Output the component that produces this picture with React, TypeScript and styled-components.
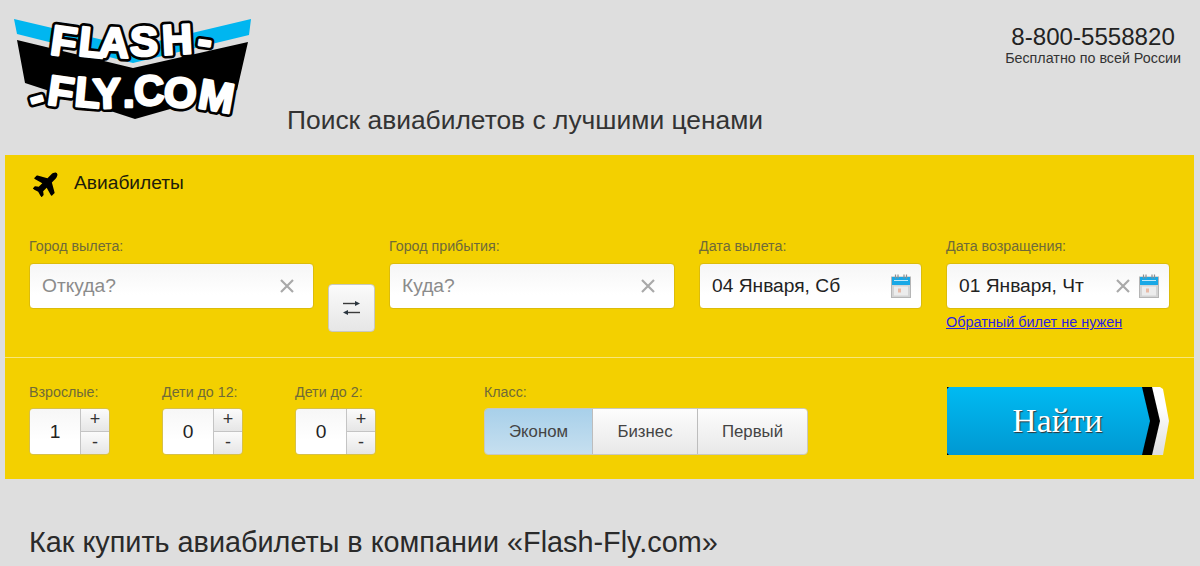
import React from 'react'
import styled, { createGlobalStyle } from 'styled-components'
import { FaPlane } from 'react-icons/fa'

const GlobalStyle = createGlobalStyle`
  html, body {
    margin: 0;
    padding: 0;
    height: 566px;
    overflow: hidden;
    background: #dedede;
    font-family: 'Liberation Sans', Arial, sans-serif;
  }
`

const Page = styled.div`
  width: 1200px;
  height: 566px;
  overflow: hidden;
`

const Header = styled.header`
  display: flex;
  height: 155px;
  box-sizing: border-box;
  padding: 13px 19px 0 14px;
`

const LogoWrap = styled.div`
  width: 240px;
  height: 110px;
  flex: none;
`

const Slogan = styled.div`
  flex: 1;
  margin: 92px 0 0 33px;
  font-size: 26.4px;
  line-height: 30px;
  color: #333;
`

const Contacts = styled.div`
  margin-top: 10px;
  text-align: center;
  color: #222;
`

const Phone = styled.div`
  font-size: 24.1px;
  line-height: 27px;
`

const Free = styled.div`
  font-size: 14.3px;
  line-height: 16px;
  color: #333;
`

const Panel = styled.section`
  width: 1189px;
  height: 324px;
  margin-left: 5px;
  background: #f3d000;
`

const Tab = styled.div`
  display: flex;
  align-items: center;
  height: 56px;
  padding-left: 28px;
  font-size: 19.2px;
  color: #1d1d0a;
`

const PlaneIcon = styled(FaPlane)`
  width: 28px;
  height: 28px;
  margin-right: 13px;
  color: #000;
  transform: rotate(-45deg);
`

const Routes = styled.div`
  display: flex;
  align-items: flex-start;
  height: 147px;
  box-sizing: border-box;
  padding: 27px 0 0 24px;
  border-bottom: 1px solid #f8e67a;
`

const Field = styled.div<{ $width: number; $gap?: number }>`
  width: ${(p) => p.$width}px;
  margin-right: ${(p) => p.$gap ?? 0}px;
  flex: none;
`

const Label = styled.div<{ $tight?: boolean }>`
  font-size: 14.25px;
  line-height: 16px;
  height: 16px;
  margin-bottom: ${(p) => (p.$tight ? 8 : 9)}px;
  color: #6f6a38;
  white-space: nowrap;
`

const InputBox = styled.div`
  display: flex;
  align-items: center;
  height: 46px;
  box-sizing: border-box;
  padding: 0 10px 0 12px;
  background: linear-gradient(#f6f6f6, #fff 70%);
  border: 1px solid #dcbc0a;
  border-radius: 4px;
`

const Input = styled.input`
  flex: 1;
  min-width: 0;
  padding: 0;
  border: 0;
  outline: 0;
  background: transparent;
  font-family: inherit;
  font-size: 19.2px;
  color: #222;
  &::placeholder {
    color: #8b8b8b;
    opacity: 1;
  }
`

const SwapButton = styled.button`
  display: flex;
  align-items: center;
  justify-content: center;
  flex: none;
  width: 47px;
  height: 48px;
  margin: 46px 14px 0 0;
  padding: 0;
  background: linear-gradient(#fbfbfb, #e6e6e6);
  border: 1px solid #c8c8c0;
  border-radius: 4px;
`

const BackLink = styled.a`
  display: block;
  margin-top: 5px;
  font-size: 14.45px;
  line-height: 16px;
  color: #2b1fe0;
  text-decoration: underline;
  white-space: nowrap;
`

const Options = styled.div`
  display: flex;
  align-items: flex-end;
  padding: 26px 0 0 24px;
`

const Stepper = styled.div`
  display: flex;
  width: 81px;
  height: 47px;
  box-sizing: border-box;
  border: 1px solid #d6c04a;
  border-radius: 4px;
  overflow: hidden;
`

const StepValue = styled.div`
  display: flex;
  align-items: center;
  justify-content: center;
  width: 50px;
  background: linear-gradient(#f7f7f7, #fff 70%);
  font-size: 19.2px;
  color: #222;
`

const StepButtons = styled.div`
  display: flex;
  flex: 1;
  flex-direction: column;
  border-left: 1px solid #c4c4c4;
`

const StepButton = styled.button`
  flex: 1;
  padding: 0 0 2px;
  border: 0;
  background: linear-gradient(#fbfbfb, #e6e6e6);
  font-family: inherit;
  font-size: 18px;
  line-height: 18px;
  color: #333;
  & + & {
    border-top: 1px solid #c4c4c4;
  }
`

const ClassGroup = styled.div`
  display: flex;
  height: 47px;
  box-sizing: border-box;
  border: 1px solid #c8c8c0;
  border-radius: 4px;
  overflow: hidden;
`

const ClassButton = styled.button<{ $width: number; $active?: boolean }>`
  width: ${(p) => p.$width}px;
  padding: 0;
  border: 0;
  background: ${(p) =>
    p.$active ? 'linear-gradient(#a8d0ea, #c6dfef)' : 'linear-gradient(#fdfdfd, #e8e8e8)'};
  font-family: inherit;
  font-size: 16.8px;
  color: #444;
  & + & {
    border-left: 1px solid #bdbdbd;
  }
`

const SearchButton = styled.button`
  position: relative;
  width: 223px;
  height: 68px;
  margin-left: 139px;
  padding: 0 2px 0 0;
  border: 0;
  background: transparent;
  font-family: 'Liberation Serif', 'Times New Roman', serif;
  font-size: 33.8px;
  color: #fff;
  text-shadow: 1px 1px 1px #333;
  &::before,
  &::after {
    content: '';
    position: absolute;
    inset: 0;
  }
  &::before {
    background: linear-gradient(#fff 30%, #dedede);
    clip-path: polygon(0 0, 213px 0, 216px 2px, 222px 50%, 216px 100%, 0 100%);
  }
  &::after {
    background: linear-gradient(#00baf2, #0098d2);
    clip-path: polygon(0 2px, 2px 0, 195px 0, 203px 50%, 195px 100%, 2px 100%, 0 calc(100% - 2px));
  }
`

const SearchBand = styled.span`
  position: absolute;
  inset: 0;
  background: #000;
  clip-path: polygon(0 0, 205px 0, 213px 50%, 205px 100%, 0 100%);
`

const SearchText = styled.span`
  position: relative;
  z-index: 2;
`

const Heading = styled.h2`
  margin: 47px 0 0 29px;
  font-size: 28.8px;
  line-height: 32px;
  font-weight: 400;
  color: #2a2a2a;
`

const LOGO_LETTERS = [
  { c: 'F', x: 37, y: 43, r: 8 },
  { c: 'L', x: 65, y: 44, r: 6 },
  { c: 'A', x: 85, y: 44, r: 3 },
  { c: 'S', x: 116, y: 43, r: 0 },
  { c: 'H', x: 148, y: 41, r: -3 },
  { c: '-', x: 184, y: 42, r: 8 },
  { c: '-', x: 15, y: 96, r: -16 },
  { c: 'F', x: 34, y: 93, r: 8 },
  { c: 'L', x: 61, y: 94, r: 5 },
  { c: 'Y', x: 79, y: 95, r: -2 },
  { c: '.', x: 109, y: 94, r: 0 },
  { c: 'C', x: 120, y: 92, r: -2 },
  { c: 'O', x: 150, y: 94, r: 3 },
  { c: 'M', x: 185, y: 97, r: 10 },
]

const LogoLetter = styled.text<{ $outline?: boolean }>`
  font-family: 'Liberation Sans', Arial, sans-serif;
  font-weight: 700;
  font-size: 42px;
  fill: ${(p) => (p.$outline ? '#000' : '#fff')};
  stroke: ${(p) => (p.$outline ? '#000' : '#fff')};
  stroke-width: ${(p) => (p.$outline ? 8 : 2.6)}px;
  stroke-linejoin: round;
`

const Logo = () => (
  <svg width='240' height='110' viewBox='0 0 240 110'>
    <polygon points='0,6 119,34 237,6 235,22 119,50 3,21' fill='#00b6f0' />
    <polygon points='3,27 119,55 234,29 223,77 121,106 11,70' fill='#000' />
    {[true, false].map((outline) =>
      LOGO_LETTERS.map((l, i) => (
        <LogoLetter
          key={`${outline}-${i}`}
          $outline={outline}
          x={l.x}
          y={l.y}
          transform={`rotate(${l.r} ${l.x + 13} ${l.y - 14})`}
        >
          {l.c}
        </LogoLetter>
      ))
    )}
  </svg>
)

const CloseIcon = () => (
  <svg width='16' height='16' viewBox='0 0 16 16' style={{ flex: 'none', marginRight: 8 }}>
    <path d='M2 2 L14 14 M14 2 L2 14' stroke='#a9a9a9' strokeWidth='2.2' fill='none' />
  </svg>
)

const CalendarIcon = () => (
  <svg width='20' height='24' viewBox='0 0 20 24' style={{ flex: 'none' }}>
    <rect x='0.5' y='3' width='19' height='20.5' fill='#d4d4d4' stroke='#b5b5b5' />
    <rect x='1' y='3' width='18' height='8' fill='#19a8e6' />
    <rect x='3' y='12.5' width='14' height='9' fill='#ececec' />
    <rect x='7' y='14.5' width='3' height='4' fill='#e8b9a6' />
    <path d='M3 6.5h14' stroke='#bfe8fa' strokeWidth='1' />
    <path d='M4.5 0.5v4 M7 0.5v4 M13 0.5v4 M15.5 0.5v4' stroke='#8b8f92' strokeWidth='1.2' />
  </svg>
)

const SwapIcon = () => (
  <svg width='17' height='14' viewBox='0 0 17 14'>
    <path d='M0 2.5h13' stroke='#3a3a3a' strokeWidth='1.4' fill='none' />
    <path d='M17 2.5l-5-2.5v5z' fill='#2b3640' />
    <path d='M17 11.5h-13' stroke='#3a3a3a' strokeWidth='1.4' fill='none' />
    <path d='M0 11.5l5-2.5v5z' fill='#2b3640' />
  </svg>
)

const PASSENGERS = [
  { label: 'Взрослые:', value: 1, gap: 52 },
  { label: 'Дети до 12:', value: 0, gap: 52 },
  { label: 'Дети до 2:', value: 0, gap: 108 },
]

const CLASSES = [
  { label: 'Эконом', width: 107, active: true },
  { label: 'Бизнес', width: 105 },
  { label: 'Первый', width: 110 },
]

export default function App() {
  return (
    <Page>
      <GlobalStyle />
      <Header>
        <LogoWrap>
          <Logo />
        </LogoWrap>
        <Slogan>Поиск авиабилетов с лучшими ценами</Slogan>
        <Contacts>
          <Phone>8-800-5558820</Phone>
          <Free>Бесплатно по всей России</Free>
        </Contacts>
      </Header>
      <Panel>
        <Tab>
          <PlaneIcon />
          Авиабилеты
        </Tab>
        <Routes>
          <Field $width={285} $gap={14}>
            <Label>Город вылета:</Label>
            <InputBox>
              <Input placeholder='Откуда?' />
              <CloseIcon />
            </InputBox>
          </Field>
          <SwapButton>
            <SwapIcon />
          </SwapButton>
          <Field $width={286} $gap={24}>
            <Label>Город прибытия:</Label>
            <InputBox>
              <Input placeholder='Куда?' />
              <CloseIcon />
            </InputBox>
          </Field>
          <Field $width={223} $gap={24}>
            <Label>Дата вылета:</Label>
            <InputBox>
              <Input defaultValue='04 Января, Сб' />
              <CalendarIcon />
            </InputBox>
          </Field>
          <Field $width={224}>
            <Label>Дата возращения:</Label>
            <InputBox>
              <Input defaultValue='01 Января, Чт' />
              <CloseIcon />
              <CalendarIcon />
            </InputBox>
            <BackLink>Обратный билет не нужен</BackLink>
          </Field>
        </Routes>
        <Options>
          {PASSENGERS.map((p) => (
            <Field key={p.label} $width={81} $gap={p.gap}>
              <Label $tight>{p.label}</Label>
              <Stepper>
                <StepValue>{p.value}</StepValue>
                <StepButtons>
                  <StepButton>+</StepButton>
                  <StepButton>-</StepButton>
                </StepButtons>
              </Stepper>
            </Field>
          ))}
          <Field $width={324}>
            <Label $tight>Класс:</Label>
            <ClassGroup>
              {CLASSES.map((c) => (
                <ClassButton key={c.label} $width={c.width} $active={c.active}>
                  {c.label}
                </ClassButton>
              ))}
            </ClassGroup>
          </Field>
          <SearchButton>
            <SearchBand />
            <SearchText>Найти</SearchText>
          </SearchButton>
        </Options>
      </Panel>
      <Heading>Как купить авиабилеты в компании «Flash-Fly.com»</Heading>
    </Page>
  )
}
